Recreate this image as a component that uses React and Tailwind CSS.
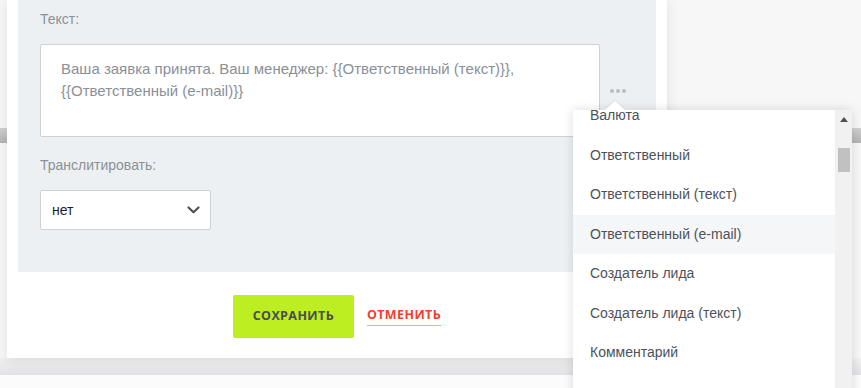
import React from 'react'

const items = [
  'Валюта',
  'Ответственный',
  'Ответственный (текст)',
  'Ответственный (e-mail)',
  'Создатель лида',
  'Создатель лида (текст)',
  'Комментарий',
]

function Chevron() {
  return (
    <svg width="13" height="8" viewBox="0 0 13 8" fill="none">
      <path d="M1.5 1.5L6.5 6.2L11.5 1.5" stroke="#4d5157" strokeWidth="2.2" strokeLinecap="round" strokeLinejoin="round" />
    </svg>
  )
}

function App() {
  return (
    <div className="relative w-[861px] h-[388px] overflow-hidden bg-white font-['Liberation_Sans',Arial,sans-serif]">
      {/* page behind the modal */}
      <div className="flex flex-col h-full">
        <div className="h-[128px] bg-[#f7f7f7]" />
        <div className="h-[15px] bg-gradient-to-b from-[#d0d0d0] to-[#b3b3b3]" />
        <div className="h-[215px] bg-[#f7f7f7]" />
        <div className="h-[17px] bg-gradient-to-b from-[#f1f1f2] to-[#e2e2e4]" />
        <div className="flex-1 bg-[#fcfbfb]" />
      </div>

      {/* modal */}
      <div className="absolute left-[7px] top-0 w-[660px] h-[358px] bg-white shadow-[0_2px_12px_rgba(0,0,0,0.10)] flex flex-col">
        <div className="mx-[11px] bg-[#edf0f3] px-[22px] pt-[9px] pb-[42px]">
          <div className="text-[14px] leading-[20px] text-[#8b9198]">Текст:</div>
          <div className="mt-[15px] flex items-start">
            <div className="w-[560px] h-[93px] bg-white border border-[#cdd1d6] rounded-[2px] pl-[20px] pr-[16px] pt-[13px] text-[15px] leading-[22px] text-[#8a9098]">
              Ваша заявка принята. Ваш менеджер: {'{{'}Ответственный (текст){'}}'},
              <br />
              {'{{'}Ответственный (e-mail){'}}'}
            </div>
            <div className="ml-[10px] mt-[45px] flex gap-[2px]">
              <span className="w-[4px] h-[4px] rounded-full bg-[#b8bdc3]" />
              <span className="w-[4px] h-[4px] rounded-full bg-[#b8bdc3]" />
              <span className="w-[4px] h-[4px] rounded-full bg-[#b8bdc3]" />
            </div>
          </div>
          <div className="mt-[18px] text-[14px] leading-[20px] text-[#8b9198]">Транслитировать:</div>
          <div className="mt-[15px] w-[171px] h-[40px] bg-white border border-[#cdd1d6] rounded-[2px] pl-[11px] pr-[10px] flex items-center justify-between">
            <span className="text-[14px] text-[#1f1f1f]">нет</span>
            <Chevron />
          </div>
        </div>
        <div className="flex-1 flex items-center justify-center gap-[13px] pt-[2px]">
          <button className="w-[121px] h-[43px] rounded-[2px] bg-[#bdee1f] text-[#4b4a55] font-['Open_Sans',sans-serif] font-bold text-[12.5px] tracking-[0.4px]">
            СОХРАНИТЬ
          </button>
          <button className="font-['Open_Sans',sans-serif] font-bold text-[12.5px] tracking-[0.4px] text-[#f2402b] border-b border-[#f6a79a] leading-[16px] pb-[2px]">
            ОТМЕНИТЬ
          </button>
        </div>
      </div>

      {/* pointer to dropdown */}
      <div className="absolute left-[605px] top-[101px] w-0 h-0 border-l-[10px] border-r-[10px] border-b-[9px] border-l-transparent border-r-transparent border-b-white z-20 drop-shadow-[0_-1px_1px_rgba(0,0,0,0.06)]" />

      {/* dropdown */}
      <div className="absolute left-[573px] top-[110px] w-[279px] h-[290px] bg-white shadow-[0_0_10px_rgba(0,0,0,0.14)] flex z-10">
        <div className="flex-1 overflow-hidden">
          <div className="-mt-[14px] flex flex-col">
            {items.map((t, i) => (
              <div
                key={t}
                className={`h-[39.5px] flex items-center pl-[17px] text-[14px] text-[#4d525a] ${i === 3 ? 'bg-[#f5f6f8]' : ''}`}
              >
                {t}
              </div>
            ))}
          </div>
        </div>
        <div className="w-[17px] bg-[#f1f1f1] flex flex-col items-center">
          <svg className="mt-[7px]" width="8" height="5" viewBox="0 0 8 5">
            <path d="M0 5L4 0L8 5Z" fill="#505050" />
          </svg>
          <div className="mt-[26px] w-[12px] h-[24px] bg-[#c1c1c1]" />
        </div>
      </div>
    </div>
  )
}

export default App
